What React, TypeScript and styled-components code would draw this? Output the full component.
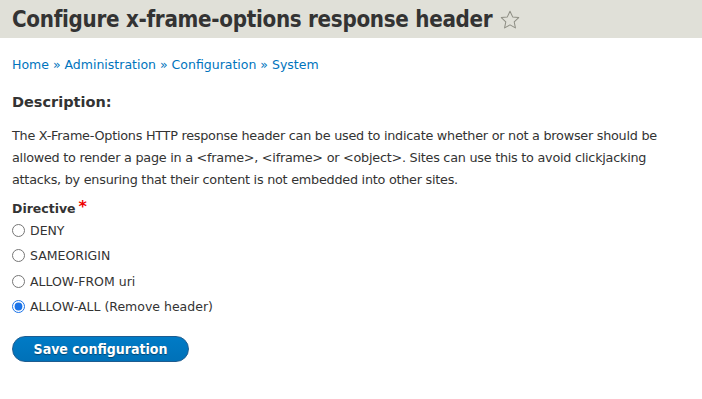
import React, { useState } from "react";
import styled, { createGlobalStyle } from "styled-components";

const GlobalStyle = createGlobalStyle`
  html, body {
    margin: 0;
    padding: 0;
    background: #fff;
  }
  body {
    font-family: "DejaVu Sans", "Liberation Sans", sans-serif;
    color: #333;
    font-size: 13px;
  }
`;

const Header = styled.div`
  background: #e0e0d8;
  height: 38px;
  padding: 0 12px;
  display: flex;
  align-items: center;
`;

const Title = styled.h1`
  margin: 0;
  font-family: "DejaVu Sans Condensed", sans-serif;
  font-weight: 600;
  font-size: 22.2px;
  letter-spacing: -0.3px;
  color: #333;
  display: flex;
  align-items: center;
  gap: 7px;
`;

const Star = styled.svg`
  width: 22px;
  height: 22px;
  margin-top: 1px;
`;

const Content = styled.div`
  padding: 18px 12px 0;
`;

const Breadcrumb = styled.nav`
  font-size: 12.5px;
  line-height: 18px;
  color: #0074bd;
  a {
    color: #0074bd;
    text-decoration: none;
  }
`;

const SectionTitle = styled.h2`
  margin: 18px 0 0;
  font-weight: bold;
  font-size: 14.5px;
  line-height: 20px;
  color: #333;
`;

const Paragraph = styled.p`
  margin: 13px 0 0;
  font-size: 12.8px;
  letter-spacing: -0.25px;
  line-height: 21.8px;
  color: #333;
`;

const FieldLabel = styled.div`
  margin-top: 10px;
  font-weight: bold;
  font-size: 12.5px;
  line-height: 18px;
  color: #333;
`;

const Required = styled.span`
  color: #e00;
  margin-left: 3px;
  font-size: 16px;
  vertical-align: top;
  line-height: 14px;
`;

const Options = styled.div`
  display: flex;
  flex-direction: column;
  gap: 7.5px;
  margin-top: 3px;
`;

const Option = styled.label`
  display: flex;
  align-items: center;
  gap: 5px;
  height: 18px;
  font-size: 12.5px;
  color: #333;
`;

const Radio = styled.input`
  margin: 0;
  width: 13px;
  height: 13px;
  accent-color: #1a73e8;
`;

const SaveButton = styled.button`
  margin-top: 20px;
  width: 177px;
  height: 26px;
  border-radius: 20px;
  border: 1px solid #1e5c90;
  background: linear-gradient(#007bc6, #0071b8);
  color: #fff;
  font-family: "DejaVu Sans Condensed", sans-serif;
  font-weight: bold;
  font-size: 14px;
  text-shadow: 0 1px 1px rgba(0, 0, 0, 0.4);
  padding: 0;
`;

const options = ["DENY", "SAMEORIGIN", "ALLOW-FROM uri", "ALLOW-ALL (Remove header)"];

export default function App() {
  const [selected, setSelected] = useState(3);
  return (
    <>
      <GlobalStyle />
      <Header>
        <Title>
          Configure x-frame-options response header
          <Star viewBox="0 0 24 24">
            <path
              d="M12 2.5l2.9 6.1 6.6.8-4.9 4.6 1.3 6.6L12 17.3l-5.9 3.3 1.3-6.6-4.9-4.6 6.6-.8z"
              fill="none"
              stroke="#8e8e84"
              strokeWidth="1.1"
              strokeLinejoin="round"
            />
          </Star>
        </Title>
      </Header>
      <Content>
        <Breadcrumb>
          <a href="#">Home</a> » <a href="#">Administration</a> » <a href="#">Configuration</a> »{" "}
          <a href="#">System</a>
        </Breadcrumb>
        <SectionTitle>Description:</SectionTitle>
        <Paragraph>
          The X-Frame-Options HTTP response header can be used to indicate whether or not a browser should be
          allowed to render a page in a &lt;frame&gt;, &lt;iframe&gt; or &lt;object&gt;. Sites can use this to
          avoid clickjacking attacks, by ensuring that their content is not embedded into other sites.
        </Paragraph>
        <FieldLabel>
          Directive<Required>*</Required>
        </FieldLabel>
        <Options>
          {options.map((o, i) => (
            <Option key={o}>
              <Radio type="radio" name="directive" checked={selected === i} onChange={() => setSelected(i)} />
              {o}
            </Option>
          ))}
        </Options>
        <SaveButton>Save configuration</SaveButton>
      </Content>
    </>
  );
}
